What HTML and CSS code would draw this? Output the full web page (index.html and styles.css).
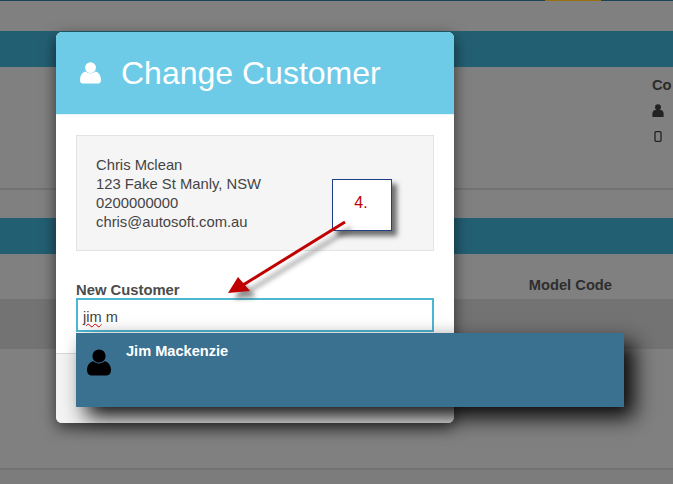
FILE: index.html
```html
<!DOCTYPE html>
<html lang="en">
<head>
<meta charset="utf-8">
<title>Change Customer</title>
<link rel="stylesheet" href="styles.css">
</head>
<body>
<div class="page">
  <div class="topbar"><div class="topbar-accent"></div></div>
  <div class="band band-first"></div>
  <section class="panel">
    <div class="contact">
      <div class="contact-title">Co</div>
      <svg class="contact-icon" viewBox="0 0 12 13"><circle cx="6" cy="3.2" r="3"/><path d="M0.4 13V9.4C0.4 7.4 1.8 6 3.4 6H8.6C10.2 6 11.6 7.4 11.6 9.4V13Z"/></svg>
      <svg class="contact-icon phone" viewBox="0 0 8 11"><rect x="1" y="0.7" width="6" height="9.6" rx="1" fill="none" stroke="#222" stroke-width="1.3"/></svg>
    </div>
  </section>
  <div class="panel-foot"></div>
  <div class="band"></div>
  <div class="table-head"><span class="model-code">Model Code</span></div>
  <div class="row row-dark"></div>
  <div class="row"></div>
  <div class="row row-tall"></div>
  <div class="row-end"></div>
</div>

<div class="modal">
  <header class="modal-head">
    <svg class="head-icon" viewBox="0 0 21 22"><circle cx="10.5" cy="5.6" r="5.4"/><path d="M0 18.5C0 12.5 3 9.6 5.6 9.4C7 10.6 8.6 11.2 10.5 11.2C12.4 11.2 14 10.6 15.4 9.4C18 9.6 21 12.5 21 18.5C21 20.6 19.6 21.6 17.8 21.6H3.2C1.4 21.6 0 20.6 0 18.5Z"/></svg>
    <h1 class="modal-title">Change Customer</h1>
  </header>
  <div class="modal-body">
    <div class="well">
      <div>Chris Mclean</div>
      <div>123 Fake St Manly, NSW</div>
      <div>0200000000</div>
      <div>chris@autosoft.com.au</div>
    </div>
    <div class="field-label">New Customer</div>
    <div class="field-input"><span class="misspelt">jim</span> m</div>
  </div>
  <div class="modal-foot"></div>
</div>

<div class="suggest">
  <svg class="suggest-icon" viewBox="0 0 24 27"><circle cx="12" cy="7" r="6.6"/><path d="M0 21C0 15.5 3.4 12.6 6.4 12.2C8 13.6 9.8 14.4 12 14.4C14.2 14.4 16 13.6 17.6 12.2C20.6 12.6 24 15.5 24 21C24 24.4 22.4 26.4 19.6 26.4H4.4C1.6 26.4 0 24.4 0 21Z"/></svg>
  <span class="suggest-name">Jim Mackenzie</span>
</div>

<div class="callout">4.</div>
<svg class="arrow" viewBox="0 0 673 484">
  <defs><filter id="soft" x="-20%" y="-20%" width="140%" height="140%"><feGaussianBlur stdDeviation="2.5"/></filter></defs>
  <g fill="#555" stroke="#555" opacity="0.65" filter="url(#soft)" transform="translate(6 6)">
    <line x1="345" y1="222" x2="243" y2="285" stroke-width="3"/>
    <polygon points="228,293 238,277 250,291" stroke="none"/>
  </g>
  <line x1="345" y1="222" x2="243" y2="285" stroke="#c00000" stroke-width="3"/>
  <polygon points="228,293 238,277 250,291" fill="#c00000"/>
</svg>
</body>
</html>
```
FILE: styles.css
```css
* { box-sizing: border-box; }
html, body { margin: 0; padding: 0; }
body {
  width: 673px;
  height: 484px;
  overflow: hidden;
  position: relative;
  background: #808080;
  font-family: "Liberation Sans", Arial, sans-serif;
}
.page { display: flex; flex-direction: column; height: 484px; }
.topbar { height: 1px; background: #1b4454; position: relative; flex: none; }
.topbar-accent { position: absolute; left: 545px; width: 56px; top: 0; height: 1px; background: #9a6f10; }
.band { height: 36px; background: #235f73; flex: none; }
.band-first { margin-top: 30px; }
.panel { height: 121px; display: flex; justify-content: flex-end; flex: none; }
.contact { width: 21px; padding-top: 11px; display: flex; flex-direction: column; align-items: flex-start; }
.contact-title { font-size: 14.7px; font-weight: 700; color: #2a2a2a; line-height: 15px; white-space: nowrap; }
.contact-icon { width: 12px; height: 13px; margin-top: 11px; fill: #222; flex: none; }
.contact-icon.phone { width: 8px; height: 11px; margin: 14px 0 0 2px; }
.panel-foot { height: 30px; border-top: 2px solid #737373; flex: none; }
.table-head { height: 45px; position: relative; flex: none; display: flex; justify-content: flex-end; align-items: center; padding: 16px 61px 0 0; }
.model-code { font-size: 14.7px; font-weight: 700; color: #2e2e2e; }
.row { height: 50px; flex: none; }
.row-dark { background: #737373; }
.row-tall { height: 69px; }
.row-end { flex: 1; border-top: 2px solid #737373; background: #7c7c7c; }

.modal {
  position: absolute;
  left: 56px;
  top: 32px;
  width: 398px;
  height: 391px;
  background: #fff;
  border-radius: 6px;
  box-shadow: 0 5px 15px rgba(0, 0, 0, 0.6);
  display: flex;
  flex-direction: column;
  overflow: hidden;
}
.modal-head {
  height: 83px;
  flex: none;
  background: #6dcbe8;
  border-bottom: 1px solid #e4f5fa;
  display: flex;
  align-items: center;
  padding-left: 24px;
  color: #fff;
}
.head-icon { width: 21px; height: 22px; fill: #fff; flex: none; margin-top: -1px; }
.modal-title { margin: 0 0 0 20px; font-size: 32px; font-weight: 400; line-height: 36px; }
.modal-body { flex: 1; padding: 20px 20px 0; }
.well {
  height: 116px;
  background: #f5f5f5;
  border: 1px solid #e3e3e3;
  padding: 20px 19px 0;
  font-size: 14.8px;
  line-height: 19px;
  color: #444;
}
.field-label { margin-top: 30px; font-size: 14.8px; line-height: 18px; font-weight: 700; color: #4c4c4c; }
.field-input {
  height: 34px;
  margin-top: -1px;
  border: 2px solid #4db6d3;
  padding: 2px 5px 0;
  font-size: 14.6px;
  line-height: 30px;
  color: #444;
  background: #fff;
}
.misspelt { text-decoration: underline wavy #d00000 1px; text-underline-offset: 1px; }
.modal-foot { height: 70px; flex: none; background: #f3f3f3; border-top: 1px solid #d8d8d8; }

.suggest {
  position: absolute;
  left: 76px;
  top: 333px;
  width: 548px;
  height: 74px;
  background: #3a7191;
  box-shadow: 10px 10px 20px rgba(0, 0, 0, 0.95);
  display: flex;
  align-items: flex-start;
  padding: 16px 0 0 11px;
}
.suggest-icon { width: 24px; height: 27px; fill: #000; flex: none; }
.suggest-name { margin: -10px 0 0 15px; font-size: 14.6px; line-height: 24px; font-weight: 700; color: #fff; }

.arrow { position: absolute; left: 0; top: 0; width: 673px; height: 484px; }
.callout {
  position: absolute;
  left: 332px;
  top: 179px;
  width: 60px;
  height: 52px;
  background: #fff;
  border: 1px solid #1f3f86;
  box-shadow: 5px 5px 5px rgba(0, 0, 0, 0.55);
  color: #c00000;
  font-size: 16px;
  text-align: center;
  padding: 14px 2px 0 0;
}
```
